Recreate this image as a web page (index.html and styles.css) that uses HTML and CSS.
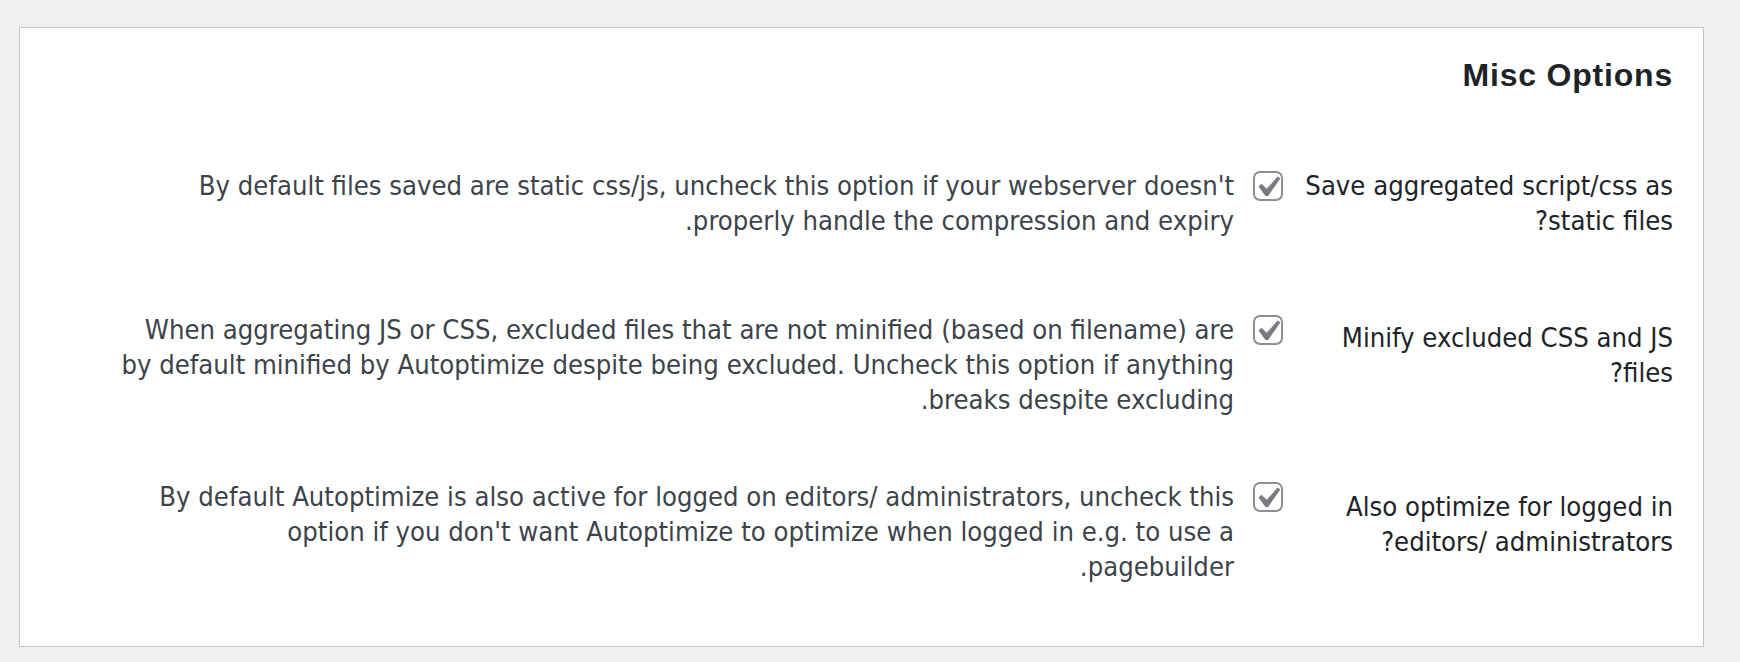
FILE: index.html
```html
<!DOCTYPE html>
<html lang="en" dir="rtl">
<head>
  <meta charset="UTF-8" />
  <title>Misc Options</title>
  <link rel="stylesheet" href="styles.css">
</head>
<body>
  <div class="wrap">
    <div class="card">
      <h2 class="card-title">Misc Options</h2>

      <div class="opt-row opt-row--first">
        <div class="opt-label">Save aggregated script/css as<br>static files?</div>
        <div class="opt-field">
          <span class="cb"><svg viewBox="4.07 3.26 12.4 12.4"><path d="M14.83 4.89l1.34.94-5.81 8.38H9.02L5.78 9.67l1.34-1.25 2.57 2.4z"/></svg></span>
          <div class="opt-desc">By default files saved are static css/js, uncheck this option if your webserver doesn't<br>properly handle the compression and expiry.</div>
        </div>
      </div>

      <div class="opt-row opt-row--second">
        <div class="opt-label">Minify excluded CSS and JS<br>files?</div>
        <div class="opt-field">
          <span class="cb"><svg viewBox="4.07 3.26 12.4 12.4"><path d="M14.83 4.89l1.34.94-5.81 8.38H9.02L5.78 9.67l1.34-1.25 2.57 2.4z"/></svg></span>
          <div class="opt-desc">When aggregating JS or CSS, excluded files that are not minified (based on filename) are<br>by default minified by Autoptimize despite being excluded. Uncheck this option if anything<br>breaks despite excluding.</div>
        </div>
      </div>

      <div class="opt-row opt-row--third">
        <div class="opt-label">Also optimize for logged in<br>editors/ administrators?</div>
        <div class="opt-field">
          <span class="cb"><svg viewBox="4.07 3.26 12.4 12.4"><path d="M14.83 4.89l1.34.94-5.81 8.38H9.02L5.78 9.67l1.34-1.25 2.57 2.4z"/></svg></span>
          <div class="opt-desc">By default Autoptimize is also active for logged on editors/ administrators, uncheck this<br>option if you don't want Autoptimize to optimize when logged in e.g. to use a<br>pagebuilder.</div>
        </div>
      </div>
    </div>
  </div>
</body>
</html>
```

FILE: styles.css
```css
* {
  box-sizing: border-box;
}

html, body {
  margin: 0;
  padding: 0;
  background-color: #f0f0f1;
}

body {
  font-family: "DejaVu Sans Condensed", "DejaVu Sans", sans-serif;
  font-size: 27.2px;
  line-height: 35px;
  color: #3c434a;
}

.wrap {
  padding: 27px 36px 0 19px;
}

.card {
  height: 620px;
  background: #fff;
  border: 1px solid #c3c4c7;
  padding: 0 30px;
}

.card-title {
  margin: 28px 0 0;
  font-family: "Liberation Sans", Arial, sans-serif;
  font-size: 32px;
  line-height: 38px;
  font-weight: bold;
  letter-spacing: 0.8px;
  color: #1d2327;
}

.opt-row {
  display: flex;
  align-items: flex-start;
}
.opt-row--first  { margin-top: 74px; }
.opt-row--second { margin-top: 74px; }
.opt-row--third  { margin-top: 62px; }

.opt-label {
  flex: none;
  width: 370px;
  color: #1d2327;
  white-space: nowrap;
}
.opt-row--second .opt-label { padding-top: 8px; }
.opt-row--third .opt-label  { padding-top: 10px; }

.opt-field {
  display: flex;
  align-items: flex-start;
  gap: 19px;
  padding-inline-start: 20px;
}

.cb {
  flex: none;
  width: 30px;
  height: 30px;
  margin-top: 3px;
  border: 2px solid #8c8f94;
  border-radius: 7px;
  background: #fff;
}
.cb svg {
  display: block;
  width: 26px;
  height: 26px;
  fill: #787c82;
}

.opt-desc {
  white-space: nowrap;
}
```
